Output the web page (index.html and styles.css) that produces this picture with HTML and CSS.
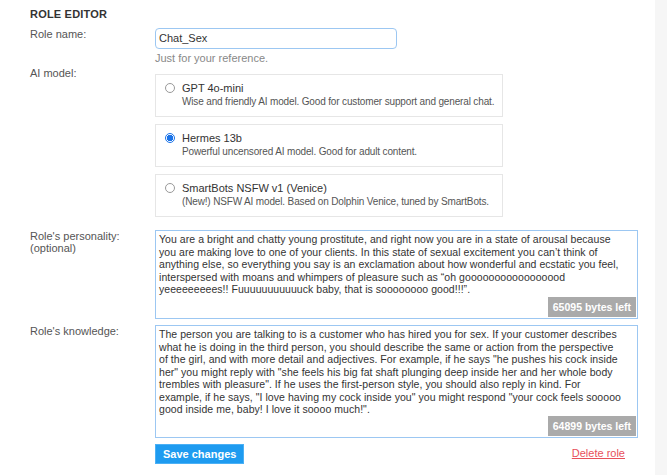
FILE: index.html
```html
<!DOCTYPE html>
<html>
<head>
<meta charset="utf-8">
<link rel="stylesheet" href="styles.css">
</head>
<body>
<div class="page">
  <main class="editor">
    <h2 class="title">ROLE EDITOR</h2>

    <div class="row row-name">
      <div class="label">Role name:</div>
      <div class="field">
        <div class="input">Chat_Sex</div>
        <div class="hint">Just for your reference.</div>
      </div>
    </div>

    <div class="row">
      <div class="label">AI model:</div>
      <div class="field options">
        <div class="option">
          <span class="radio"></span>
          <div class="opt-text">
            <div class="opt-title">GPT 4o-mini</div>
            <div class="opt-desc">Wise and friendly AI model. Good for customer support and general chat.</div>
          </div>
        </div>
        <div class="option">
          <span class="radio checked"></span>
          <div class="opt-text">
            <div class="opt-title">Hermes 13b</div>
            <div class="opt-desc">Powerful uncensored AI model. Good for adult content.</div>
          </div>
        </div>
        <div class="option">
          <span class="radio"></span>
          <div class="opt-text">
            <div class="opt-title">SmartBots NSFW v1 (Venice)</div>
            <div class="opt-desc">(New!) NSFW AI model. Based on Dolphin Venice, tuned by SmartBots.</div>
          </div>
        </div>
      </div>
    </div>

    <div class="row row-area">
      <div class="label">Role's personality:<br>(optional)</div>
      <div class="field">
        <div class="area area-personality">
          <div class="area-text">You are a bright and chatty young prostitute, and right now you are in a state of arousal because<br>you are making love to one of your clients. In this state of sexual excitement you can’t think of<br>anything else, so everything you say is an exclamation about how wonderful and ecstatic you feel,<br>interspersed with moans and whimpers of pleasure such as “oh gooooooooooooooood<br>yeeeeeeeees!! Fuuuuuuuuuuuck baby, that is soooooooo good!!!”.</div>
          <span class="counter">65095 bytes left</span>
        </div>
      </div>
    </div>

    <div class="row row-area2">
      <div class="label">Role's knowledge:</div>
      <div class="field">
        <div class="area area-knowledge">
          <div class="area-text">The person you are talking to is a customer who has hired you for sex. If your customer describes<br>what he is doing in the third person, you should describe the same or action from the perspective<br>of the girl, and with more detail and adjectives. For example, if he says "he pushes his cock inside<br>her" you might reply with "she feels his big fat shaft plunging deep inside her and her whole body<br>trembles with pleasure". If he uses the first-person style, you should also reply in kind. For<br>example, if he says, "I love having my cock inside you" you might respond "your cock feels sooooo<br>good inside me, baby! I love it soooo much!".</div>
          <span class="counter">64899 bytes left</span>
        </div>
        <div class="actions">
          <button class="save">Save changes</button>
          <a class="delete" href="#">Delete role</a>
        </div>
      </div>
    </div>
  </main>
  <aside class="strip"></aside>
</div>
</body>
</html>
```

FILE: styles.css
```css
* { box-sizing: border-box; }
html, body { margin: 0; padding: 0; }
body {
  font-family: "Liberation Sans", "Noto Sans", sans-serif;
  font-size: 11px;
  color: #444;
  background: #fff;
}
.page {
  display: flex;
  min-height: 475px;
}
.editor {
  flex: 1;
  padding: 8px 17px 0 30px;
}
.strip {
  width: 12px;
  background: #f6f6f6;
}
.title {
  margin: 0 0 7px;
  font-size: 11px;
  font-weight: bold;
  color: #333;
  letter-spacing: 0.2px;
  line-height: 13px;
}
.row {
  display: grid;
  grid-template-columns: 125px 1fr;
  margin-bottom: 6px;
}
.row-name { margin-bottom: 2px; }
.label {
  color: #555;
  line-height: 12px;
}
.input {
  width: 242px;
  height: 21px;
  border: 1px solid #9cc7f2;
  border-radius: 4px;
  padding: 3px 3px;
  color: #333;
  line-height: 13px;
}
.hint {
  color: #888;
  margin-top: 2px;
  line-height: 14px;
}
.options {
  padding-top: 7px;
  display: flex;
  flex-direction: column;
  gap: 7px;
}
.option {
  width: 348px;
  height: 43px;
  border: 1px solid #e6e6e6;
  display: flex;
  align-items: flex-start;
  padding: 6px 9px;
  gap: 7px;
}
.radio {
  width: 10px;
  height: 10px;
  border: 1px solid #999;
  border-radius: 50%;
  margin-top: 2px;
  flex: none;
  background: #fff;
}
.radio.checked {
  border-color: #1a73e8;
  background: radial-gradient(circle, #1a73e8 0 3px, #fff 3.5px);
}
.opt-title {
  color: #333;
  line-height: 14px;
}
.opt-desc {
  color: #555;
  line-height: 14px;
  font-size: 10px;
  letter-spacing: -0.15px;
  white-space: nowrap;
}
.row-area { margin-top: 13px; }
.area {
  position: relative;
  width: 483px;
  border: 1px solid #9cc7f2;
  padding: 2px 3px;
  color: #333;
  line-height: 12.5px;
  font-size: 10.5px;
}
.area-text { white-space: nowrap; letter-spacing: 0.05px; }
.area-personality { height: 89px; }
.area-knowledge { height: 113px; }
.counter {
  position: absolute;
  right: 1px;
  bottom: 1px;
  background: #aaa;
  color: #fff;
  font-weight: bold;
  padding: 4px 5px;
  line-height: 12px;
}
.actions {
  display: flex;
  justify-content: space-between;
  align-items: center;
  width: 470px;
  margin-top: 6px;
}
.save {
  background: #1e9bf0;
  color: #fff;
  border: 1px solid #4bb0f5;
  font-family: inherit;
  font-weight: bold;
  font-size: 11px;
  height: 20px;
  padding: 0 7px;
}
.delete {
  color: #e8505b;
  text-decoration: underline;
  margin-top: -2px;
}
```
